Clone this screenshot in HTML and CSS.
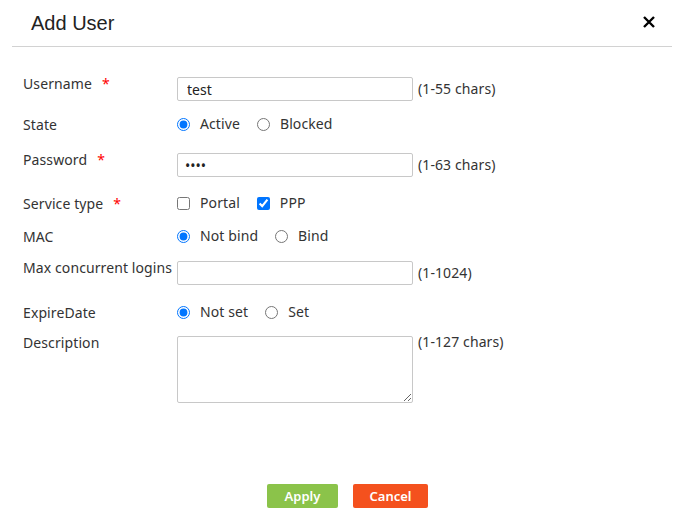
FILE: index.html
```html
<!DOCTYPE html>
<html>
<head>
<meta charset="utf-8">
<link rel="stylesheet" href="styles.css">
</head>
<body>
<div class="dialog">
  <div class="header">
    <h1 class="title">Add User</h1>
    <span class="close"><svg width="14" height="14" viewBox="0 0 14 14"><path d="M2 2 L12 12 M12 2 L2 12" stroke="#000" stroke-width="2.4" fill="none"/></svg></span>
  </div>
  <div class="form">
    <div class="label label-input">Username<span class="req">*</span></div>
    <div class="ctrl ctrl-input"><input class="text" type="text" value="test"><span class="hint">(1-55 chars)</span></div>

    <div class="label label-radio">State</div>
    <div class="ctrl ctrl-radio">
      <label class="opt"><input type="radio" name="st" checked>Active</label>
      <label class="opt"><input type="radio" name="st">Blocked</label>
    </div>

    <div class="label label-input">Password<span class="req">*</span></div>
    <div class="ctrl ctrl-input"><input class="text pw" type="password" value="abcd"><span class="hint">(1-63 chars)</span></div>

    <div class="label label-radio">Service type<span class="req">*</span></div>
    <div class="ctrl ctrl-radio">
      <label class="opt"><input type="checkbox">Portal</label>
      <label class="opt"><input type="checkbox" checked>PPP</label>
    </div>

    <div class="label label-radio">MAC</div>
    <div class="ctrl ctrl-radio">
      <label class="opt"><input type="radio" name="mac" checked>Not bind</label>
      <label class="opt"><input type="radio" name="mac">Bind</label>
    </div>

    <div class="label label-input">Max concurrent logins</div>
    <div class="ctrl ctrl-input"><input class="text" type="text" value=""><span class="hint">(1-1024)</span></div>

    <div class="label label-radio">ExpireDate</div>
    <div class="ctrl ctrl-radio">
      <label class="opt"><input type="radio" name="exp" checked>Not set</label>
      <label class="opt"><input type="radio" name="exp">Set</label>
    </div>

    <div class="label label-input">Description</div>
    <div class="ctrl ctrl-area"><textarea class="area"></textarea><span class="hint hint-top">(1-127 chars)</span></div>
  </div>
  <div class="buttons">
    <button class="btn apply">Apply</button>
    <button class="btn cancel">Cancel</button>
  </div>
</div>
</body>
</html>
```
FILE: styles.css
```css
html, body {
  margin: 0;
  padding: 0;
  background: #fff;
}
body {
  font-family: "Noto Sans", "Open Sans", sans-serif;
  font-size: 14px;
  color: #333;
}
.dialog {
  width: 683px;
  height: 514px;
  position: relative;
}
.header {
  margin: 0 11px 0 12px;
  height: 46px;
  border-bottom: 1px solid #d2d2d2;
  display: flex;
  align-items: flex-start;
  justify-content: space-between;
}
.title {
  margin: 12px 0 0 19px;
  font-family: "Liberation Sans", Arial, sans-serif;
  font-size: 20px;
  font-weight: normal;
  line-height: 23px;
  color: #222;
}
.close {
  margin: 15px 16px 0 0;
  width: 14px;
  height: 14px;
  display: block;
}
.close svg { display: block; }
.form {
  margin: 27px 0 0 23px;
  display: grid;
  grid-template-columns: 154px 1fr;
  grid-template-rows: 40px 36px 43px 33px 32px 44px 31px auto;
  align-items: start;
}
.label {
  line-height: 20px;
  white-space: nowrap;
  letter-spacing: 0.1px;
}
.label-input { padding-top: 0; }
.label-radio { padding-top: 1px; }
.req {
  color: #f00;
  margin-left: 10px;
  font-size: 14px;
}
.ctrl {
  display: flex;
  align-items: center;
}
.ctrl-input { margin-top: 3px; }
.ctrl-area { margin-top: 3px; align-items: flex-start; }
.text {
  box-sizing: border-box;
  width: 236px;
  height: 24px;
  border: 1px solid #c8c8c8;
  border-radius: 2px;
  padding: 0 9px;
  font-family: inherit;
  font-size: 14px;
  color: #222;
  outline: none;
  margin: 0;
}
.pw { padding-left: 7px; }
.area {
  box-sizing: border-box;
  width: 236px;
  height: 67px;
  border: 1px solid #c8c8c8;
  border-radius: 2px;
  margin: 0;
  resize: both;
  font-family: inherit;
}
.hint {
  margin-left: 5px;
  line-height: 20px;
  letter-spacing: 0.1px;
}
.hint-top { margin-top: -4px; }
.ctrl-radio {
  height: 20px;
  gap: 17px;
}
.opt {
  display: flex;
  align-items: center;
  line-height: 20px;
  letter-spacing: 0.1px;
}
.opt input {
  margin: 0 10px 0 0;
  width: 13px;
  height: 13px;
}
.buttons {
  position: absolute;
  left: 267px;
  top: 484px;
  display: flex;
  gap: 15px;
}
.btn {
  height: 24px;
  border: none;
  border-radius: 2px;
  color: #fff;
  font-family: "Noto Sans", sans-serif;
  font-size: 13px;
  font-weight: 600;
  padding: 0;
  line-height: 24px;
}
.apply { width: 71px; background: #8bc34a; }
.cancel { width: 75px; background: #f4511e; }
```
